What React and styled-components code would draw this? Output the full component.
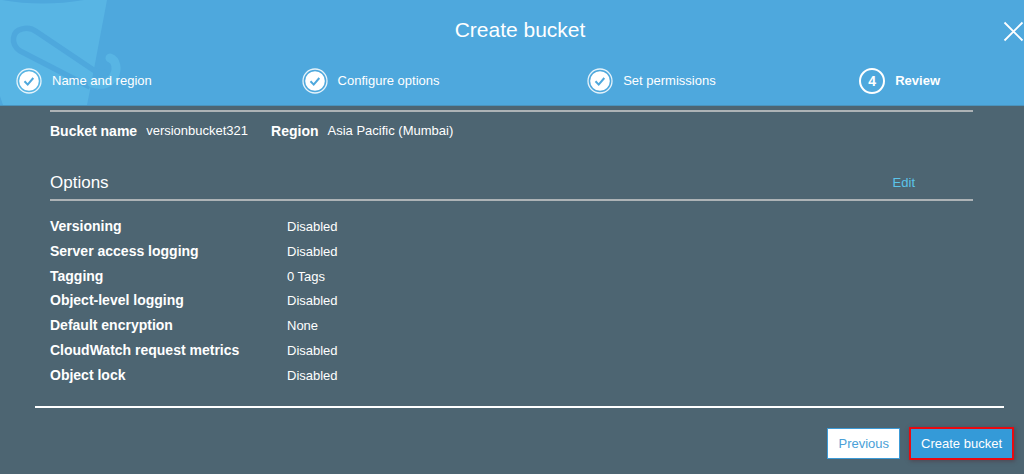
import styled, { createGlobalStyle } from "styled-components";

const GlobalStyle = createGlobalStyle`
  * {
    box-sizing: border-box;
  }
  body {
    margin: 0;
    background: #4d6572;
    color: #fff;
    font-family: "Liberation Sans", Arial, sans-serif;
    font-size: 13px;
    line-height: 20px;
  }
`;

const Header = styled.header`
  position: relative;
  overflow: hidden;
  background: #4ea8dd;
  border-bottom: 1px solid #4a93bd;
`;

const BucketArt = styled.svg`
  position: absolute;
  top: 0;
  left: 0;
`;

const Title = styled.h1`
  position: relative;
  margin: 0;
  padding: 18px 0 12px 16px;
  font-size: 21px;
  font-weight: 400;
  line-height: 24px;
  text-align: center;
`;

const CloseButton = styled.button`
  position: absolute;
  top: 20px;
  right: 0;
  display: flex;
  padding: 0;
  border: 0;
  background: none;
  color: #fff;
  cursor: pointer;
`;

const Steps = styled.ol`
  position: relative;
  display: grid;
  grid-template-columns: 21fr 21fr 20fr auto;
  margin: 0;
  padding: 14px 84px 11px 16px;
  list-style: none;
`;

const Step = styled.li`
  display: flex;
  align-items: center;
  gap: 10px;
  font-weight: ${({ $current }) => ($current ? 700 : 400)};
`;

const StepNumber = styled.span`
  width: 26px;
  height: 26px;
  border: 2px solid #fff;
  border-radius: 50%;
  font-size: 14px;
  line-height: 22px;
  text-align: center;
`;

const Review = styled.main`
  padding: 4px 51px 0 50px;
`;

const Summary = styled.dl`
  display: flex;
  margin: 0;
  padding: 9px 0 31px;
  border-top: 2px solid #adb3b6;
`;

const SummaryItem = styled.div`
  display: flex;
  gap: 9px;
  margin-right: 23px;

  dt {
    font-size: 14px;
    font-weight: 700;
  }
  dd {
    margin: 0;
  }
`;

const SectionHeader = styled.div`
  display: flex;
  justify-content: space-between;
  align-items: center;
  padding: 0 58px 5px 0;
  border-bottom: 2px solid #adb3b6;

  h2 {
    margin: 0;
    font-size: 17px;
    font-weight: 400;
    line-height: 22px;
  }
  a {
    color: #5bc4ea;
    text-decoration: none;
  }
`;

const OptionsTable = styled.table`
  height: 173px;
  margin-top: 13px;
  border-collapse: collapse;

  th,
  td {
    padding: 0;
    text-align: left;
  }
  th {
    width: 237px;
    font-size: 14px;
  }
  td {
    padding-top: 2px;
  }
`;

const Footer = styled.footer`
  display: flex;
  justify-content: flex-end;
  align-items: center;
  gap: 9px;
  margin: 19px 20px 0 35px;
  padding: 19px 0 12px;
  border-top: 2px solid #fff;
`;

const Button = styled.button`
  height: 31px;
  padding: 0 10px;
  border: 1px solid #3c9ad6;
  background: ${({ $primary }) => ($primary ? "#349ad8" : "#fff")};
  color: ${({ $primary }) => ($primary ? "#fff" : "#4a9fd8")};
  font: inherit;
  cursor: pointer;
`;

const Highlight = styled.div`
  margin-right: -10px;
  border: 2px solid #e80a10;
  box-shadow: 1px 1px 4px rgba(80, 40, 50, 0.5);

  ${Button} {
    display: block;
    height: 29px;
    border: 0;
  }
`;

const steps = ["Name and region", "Configure options", "Set permissions", "Review"];

const options = [
  ["Versioning", "Disabled"],
  ["Server access logging", "Disabled"],
  ["Tagging", "0 Tags"],
  ["Object-level logging", "Disabled"],
  ["Default encryption", "None"],
  ["CloudWatch request metrics", "Disabled"],
  ["Object lock", "Disabled"],
];

function DoneIcon() {
  return (
    <svg width="26" height="26" viewBox="0 0 26 26" fill="none" aria-hidden="true">
      <circle cx="13" cy="13" r="12" stroke="#fff" strokeOpacity="0.85" strokeWidth="1.3" />
      <circle cx="13" cy="13" r="9.8" fill="#fff" />
      <path d="M8.5 13.2l3.2 3.4 5.6-6.6" stroke="#4ea8dd" strokeWidth="2" />
    </svg>
  );
}

export default function App() {
  return (
    <>
      <GlobalStyle />
      <Header>
        <BucketArt width="124" height="105" viewBox="0 0 124 105" fill="none" aria-hidden="true">
          <path d="M0 0H107L90 90L87 105H3L0 96Z" fill="#58b5e4" />
          <path d="M2 0Q42 7 84 0Z" fill="#4ea8dd" />
          <path
            d="M90 87L20 51C10 44 12 31 22 29C28 27 33 29 37 32L92 69C98 73 103 74 107 72"
            stroke="#4ea8dd"
            strokeWidth="5.5"
          />
          <path
            d="M110 58C116 60 118 69 114 76C110 84 102 86 92 83"
            stroke="#58b5e4"
            strokeWidth="9"
            strokeLinecap="round"
          />
        </BucketArt>
        <Title>Create bucket</Title>
        <CloseButton aria-label="Close">
          <svg width="21" height="22" viewBox="0 0 21 22" stroke="currentColor" strokeWidth="1.8">
            <path d="M1.5 2.5L19.5 20.5M19.5 2.5L1.5 20.5" />
          </svg>
        </CloseButton>
        <Steps>
          {steps.map((step, i) => {
            const current = i === steps.length - 1;
            return (
              <Step key={step} $current={current} aria-current={current ? "step" : undefined}>
                {current ? <StepNumber>{i + 1}</StepNumber> : <DoneIcon />}
                {step}
              </Step>
            );
          })}
        </Steps>
      </Header>

      <Review>
        <Summary>
          <SummaryItem>
            <dt>Bucket name</dt>
            <dd>versionbucket321</dd>
          </SummaryItem>
          <SummaryItem>
            <dt>Region</dt>
            <dd>Asia Pacific (Mumbai)</dd>
          </SummaryItem>
        </Summary>

        <SectionHeader>
          <h2>Options</h2>
          <a href="#options">Edit</a>
        </SectionHeader>
        <OptionsTable>
          <tbody>
            {options.map(([name, value]) => (
              <tr key={name}>
                <th scope="row">{name}</th>
                <td>{value}</td>
              </tr>
            ))}
          </tbody>
        </OptionsTable>
      </Review>

      <Footer>
        <Button>Previous</Button>
        <Highlight>
          <Button $primary>Create bucket</Button>
        </Highlight>
      </Footer>
    </>
  );
}
